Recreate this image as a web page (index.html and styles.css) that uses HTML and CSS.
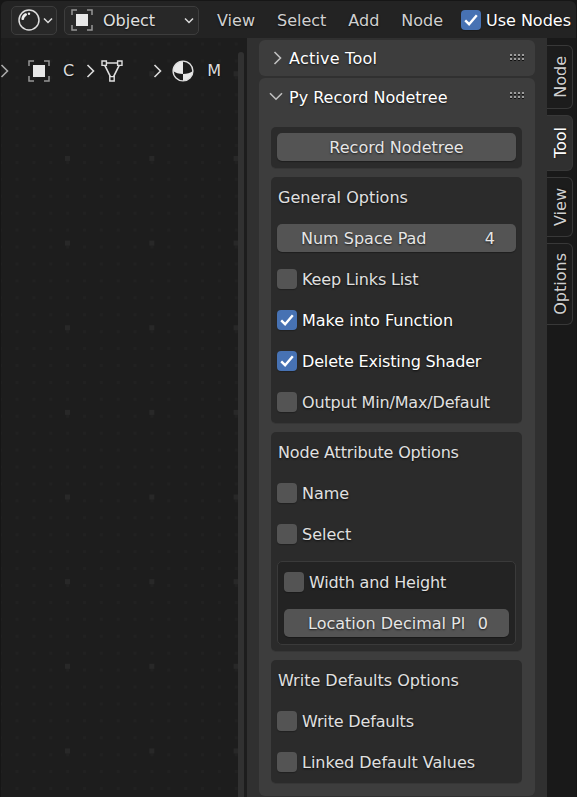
FILE: index.html
```html
<!DOCTYPE html>
<html lang="en">
<head>
<meta charset="utf-8">
<title>Shader Editor</title>
<link rel="stylesheet" href="styles.css">
</head>
<body>
<svg class="defs" width="0" height="0" aria-hidden="true">
  <symbol id="object" viewBox="0 0 22 22"><path d="M1 6V1h5M16 1h5v5M21 16v5h-5M6 21H1v-5" fill="none" stroke="#969696" stroke-width="1.5"/><path d="M5 5h12v12H5z" fill="#e8e8e8"/></symbol>
  <symbol id="down" viewBox="0 0 10 8"><path d="M1 1.5l4 4 4-4" fill="none" stroke="#dcdcdc" stroke-width="1.5"/></symbol>
  <symbol id="right" viewBox="0 0 9 14"><path d="M1.5 1l6 6-6 6" fill="none" stroke="currentColor" stroke-width="1.6"/></symbol>
  <symbol id="check" viewBox="0 0 20 20"><path d="M4.2 10.3l3.9 3.9 7.7-9" fill="none" stroke="#fff" stroke-width="2.4"/></symbol>
  <symbol id="grip" viewBox="0 0 15 7"><path d="M0 2.5h14M0 6.5h14" stroke="#111" stroke-width="1" stroke-dasharray="2 2"/><path d="M0 1h14M0 5h14" stroke="#9c9c9c" stroke-width="2" stroke-dasharray="2 2"/></symbol>
</svg>
<div class="editor">
  <header class="header">
    <div class="select editor-type">
      <svg width="22" height="22" viewBox="0 0 22 22"><circle cx="11" cy="11" r="10" fill="none" stroke="#dedede" stroke-width="1.5"/><path d="M4.7 9.8Q5 7 7.7 5.5" fill="none" stroke="#eee" stroke-width="2.6" stroke-linecap="round"/><circle cx="11" cy="4.7" r="1.2" fill="#eee"/></svg>
      <svg class="chev" width="10" height="8"><use href="#down"/></svg>
    </div>
    <div class="select mode">
      <svg width="22" height="22"><use href="#object"/></svg><span>Object</span>
      <svg class="end chev" width="10" height="8"><use href="#down"/></svg>
    </div>
    <nav class="menus"><span>View</span><span>Select</span><span>Add</span><span>Node</span></nav>
    <label class="use-nodes"><i class="box on"><svg><use href="#check"/></svg></i><span>Use Nodes</span></label>
  </header>
  <main class="body">
    <section class="canvas">
      <div class="crumbs">
        <svg class="toggle" width="9" height="14"><use href="#right"/></svg>
        <svg class="c-object" width="22" height="22"><use href="#object"/></svg>
        <span class="c-name">C</span>
        <svg class="c-sep" width="9" height="14"><use href="#right"/></svg>
        <svg class="c-mesh" width="22" height="22" viewBox="0 0 22 22" fill="none" stroke="#dedede" stroke-width="1.4"><path d="M1 1h4.4v4.4H1zM16.6 1H21v4.4h-4.4zM8.8 16.6h4.4V21H8.8z"/><path d="M5.4 3h11.2M3.8 5.4l5.6 11.2M18.2 5.4l-5.6 11.2" stroke-width="1.6"/></svg>
        <svg class="c-sep2" width="9" height="14"><use href="#right"/></svg>
        <svg class="c-mat" width="22" height="22" viewBox="0 0 22 22"><circle cx="11" cy="11" r="10" fill="#1d1d1d"/><path d="M11 1A10 10 0 0 0 1 11Q5 14 11 14zM11 14Q17 14 21 11A10 10 0 0 1 11 21z" fill="#e8e8e8"/><circle cx="11" cy="11" r="9.9" fill="none" stroke="#dedede" stroke-width="1.4"/></svg>
        <span class="c-m">M</span>
      </div>
      <div class="scroll"></div>
    </section>
    <aside class="sidebar">
      <section class="panel closed">
        <h2><svg class="arrow" width="9" height="14"><use href="#right"/></svg><span class="loose">Active Tool</span><svg class="grip" width="15" height="7"><use href="#grip"/></svg></h2>
      </section>
      <section class="panel open">
        <h2><svg class="arrow wide" width="14" height="9" viewBox="0 0 14 9"><path d="M1 1.2l6 6 6-6" fill="none" stroke="currentColor" stroke-width="1.6"/></svg><span>Py Record Nodetree</span><svg class="grip" width="15" height="7"><use href="#grip"/></svg></h2>
        <div class="group"><div class="row"><button class="field push">Record Nodetree</button></div></div>
        <div class="group">
          <div class="row title">General Options</div>
          <div class="row"><div class="field"><span>Num Space Pad</span><b>4</b></div></div>
          <label class="row tight"><i class="box"></i>Keep Links List</label>
          <label class="row lit"><i class="box on"><svg><use href="#check"/></svg></i>Make into Function</label>
          <label class="row lit tight"><i class="box on"><svg><use href="#check"/></svg></i>Delete Existing Shader</label>
          <label class="row tight"><i class="box"></i>Output Min/Max/Default</label>
        </div>
        <div class="group">
          <div class="row title tight">Node Attribute Options</div>
          <label class="row"><i class="box"></i>Name</label>
          <label class="row"><i class="box"></i>Select</label>
          <div class="subgroup">
            <label class="row tight"><i class="box"></i>Width and Height</label>
            <div class="row"><div class="field"><span>Location Decimal Pl</span><b>0</b></div></div>
          </div>
        </div>
        <div class="group">
          <div class="row title">Write Defaults Options</div>
          <label class="row tight"><i class="box"></i>Write Defaults</label>
          <label class="row"><i class="box"></i>Linked Default Values</label>
        </div>
      </section>
    </aside>
    <nav class="tabs">
      <div class="tab t-node"><span>Node</span></div>
      <div class="tab t-tool active"><span>Tool</span></div>
      <div class="tab t-view"><span>View</span></div>
      <div class="tab t-options"><span>Options</span></div>
    </nav>
  </main>
</div>
</body>
</html>
```
FILE: styles.css
```css
* { box-sizing: border-box; }
body {
  margin: 0;
  background: #161616;
  color: #e0e0e0;
  font: 16px/20px "DejaVu Sans", sans-serif;
  text-shadow: 0 1px 2px rgba(0, 0, 0, .7);
}
svg { display: block; flex: none; }
.defs { position: absolute; }
.editor {
  width: 577px;
  height: 797px;
  padding: 1px 1px 0;
  overflow: hidden;
}
.header {
  display: flex;
  align-items: center;
  height: 37px;
  padding: 1px 5px 0 10px;
  background: #232323;
  border-radius: 6px 6px 0 0;
}
.header span { padding-top: 2px; }
.chev { margin-top: 2px; }
.select {
  display: flex;
  align-items: center;
  height: 29px;
  border: 1px solid #3d3d3d;
  border-radius: 5px;
  background: #282828;
}
.editor-type { width: 46px; padding-left: 6px; gap: 3px; }
.mode { width: 135px; margin-left: 7px; padding: 0 4px 0 6px; gap: 10px; }
.select .end { margin-left: auto; }
.menus { display: flex; gap: 22px; margin-left: 18px; color: #d0d0d0; }
.use-nodes { display: flex; align-items: center; gap: 5px; margin-left: auto; color: #fff; white-space: nowrap; }
.box {
  flex: none;
  width: 20px;
  height: 20px;
  border-radius: 4px;
  background: #545454;
  box-shadow: 0 1px 1px rgba(0, 0, 0, .25);
}
.row .box { margin-bottom: 1px; }
.box.on { background: #4772b3; }
.box svg { width: 20px; height: 20px; }
.body { display: flex; height: 759px; background: #191919; }
.canvas {
  display: flex;
  justify-content: space-between;
  width: 246px;
  padding-right: 3px;
  background: conic-gradient(from 90deg at 79.3px 79.65px, #282828 90deg, transparent 0) -15.3px 38.3px / 84.3px 84.65px,
    conic-gradient(from 90deg at 13.86px 13.93px, #212121 90deg, transparent 0) .7px 24.4px / 16.86px 16.93px,
    #1d1d1d;
}
.crumbs { display: flex; align-items: center; height: 65px; color: #dcdcdc; }
.toggle { color: #aaa; margin-left: -1px; }
.c-object { margin-left: 19px; }
.c-name { margin-left: 13px; }
.c-sep { margin-left: 12px; }
.c-mesh { margin-left: 6px; }
.c-sep2 { margin-left: 30px; }
.c-mat { margin-left: 10px; }
.c-m { margin-left: 13px; }
.scroll { width: 6px; margin-top: 14px; border-radius: 3px 3px 0 0; background: #313131; }
.sidebar { display: flex; flex-direction: column; gap: 2px; width: 300px; padding: 2px 12px 0; background: #303030; }
.panel { border-radius: 6px; background: #3d3d3d; }
.closed { height: 36px; }
.open { height: 718px; padding: 0 12px; }
.panel h2 { display: flex; align-items: center; height: 38px; margin: 0; font: inherit; color: #fff; }
.panel h2 span { padding-top: 1px; }
.closed h2 { height: 37px; padding: 0 10px 0 14px; }
.open h2 { padding-right: 0; margin: 0 -2px 11px 0; }
.arrow { margin: 0 7px 1px 0; color: #c0c0c0; }
.wide { margin: 0 6px 2px -2px; }
.grip { margin: 0 0 3px auto; }
.loose { letter-spacing: .22px; }
.tight { letter-spacing: -.16px; }
.group { width: 251px; margin-bottom: 9px; border-radius: 5px; background: #2b2b2b; box-shadow: 0 1px #363636; }
.row { display: flex; align-items: center; gap: 5px; height: 41px; padding: 0 6px; white-space: nowrap; }
.title { padding-left: 7px; }
.lit { color: #fff; }
.field {
  display: flex;
  align-items: center;
  width: 100%;
  height: 28px;
  margin-bottom: 1px;
  padding: 1px 21px 0 24px;
  border: 0;
  border-radius: 5px;
  background: #545454;
  box-shadow: 0 1px 1px rgba(0, 0, 0, .3);
  color: #e6e6e6;
  font: inherit;
}
.push { justify-content: center; padding: 1px 0 0; text-shadow: inherit; }
.field b { margin-left: auto; font-weight: 400; }
.group:has(.subgroup) { padding-bottom: 6px; }
.subgroup { margin: 6px 6px 0; border: 1px solid #3a3a3a; border-radius: 5px; background: #232323; }
.tabs { display: flex; flex-direction: column; gap: 6px; padding-top: 7px; width: 29px; }
.tab {
  display: flex;
  align-items: center;
  justify-content: center;
  width: 26px;
  border: 1px solid #383838;
  border-left: 0;
  border-radius: 0 6px 6px 0;
  background: #1c1c1c;
  color: #cfcfcf;
}
.tab span { writing-mode: vertical-rl; transform: rotate(180deg); margin-left: 2px; }
.active { background: #303030; color: #fff; }
.t-node { height: 64px; }
.t-tool { height: 56px; }
.t-view { height: 60px; }
.t-options { height: 82px; }
```
